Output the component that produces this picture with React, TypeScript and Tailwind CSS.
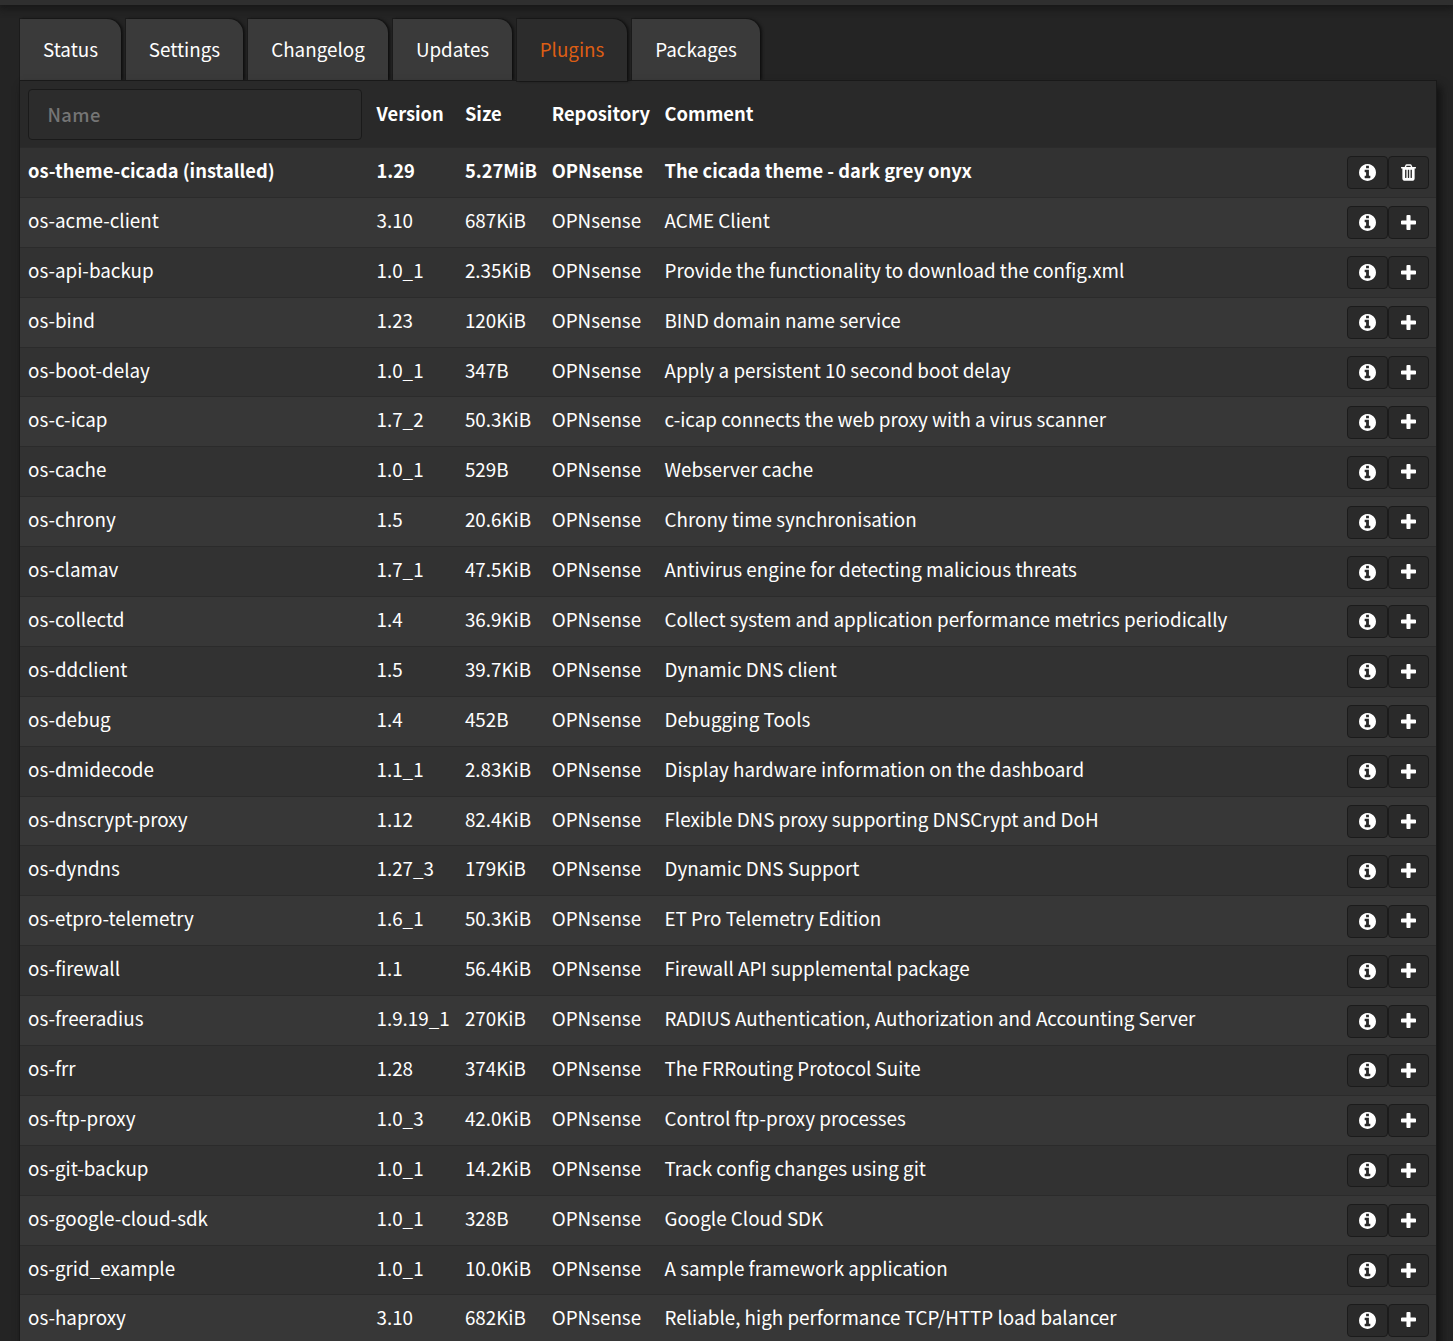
import React from "react";

const icons = {
  info: { box: "0 128 1536 1536", d: "M1024 1376v-160q0-14-9-23t-23-9h-96v-512q0-14-9-23t-23-9h-320q-14 0-23 9t-9 23v160q0 14 9 23t23 9h96v320h-96q-14 0-23 9t-9 23v160q0 14 9 23t23 9h448q14 0 23-9t9-23zm-128-896v-160q0-14-9-23t-23-9h-192q-14 0-23 9t-9 23v160q0 14 9 23t23 9h192q14 0 23-9t9-23zm640 416q0 209-103 385.5t-279.5 279.5-385.5 103-385.5-103-279.5-279.5-103-385.5 103-385.5 279.5-279.5 385.5-103 385.5 103 279.5 279.5 103 385.5z" },
  plus: { box: "0 128 1408 1408", d: "M1408 736v192q0 40-28 68t-68 28h-416v416q0 40-28 68t-68 28h-192q-40 0-68-28t-28-68v-416h-416q-40 0-68-28t-28-68v-192q0-40 28-68t68-28h416v-416q0-40 28-68t68-28h192q40 0 68 28t28 68v416h416q40 0 68 28t28 68z" },
  trash: { box: "0 128 1408 1536", d: "M512 1376v-704q0-14-9-23t-23-9h-64q-14 0-23 9t-9 23v704q0 14 9 23t23 9h64q14 0 23-9t9-23zm256 0v-704q0-14-9-23t-23-9h-64q-14 0-23 9t-9 23v704q0 14 9 23t23 9h64q14 0 23-9t9-23zm256 0v-704q0-14-9-23t-23-9h-64q-14 0-23 9t-9 23v704q0 14 9 23t23 9h64q14 0 23-9t9-23zm-544-992h448l-48-117q-7-9-17-11h-317q-10 2-17 11zm928 32v64q0 14-9 23t-23 9h-96v948q0 83-47 143.5t-113 60.5h-832q-66 0-113-58.5t-47-141.5v-952h-96q-14 0-23-9t-9-23v-64q0-14 9-23t23-9h309l70-167q15-37 54-63t79-26h320q40 0 79 26t54 63l70 167h309q14 0 23 9t9 23z" },
};

function Icon({ name, className }: { name: keyof typeof icons; className: string }) {
  return (
    <svg viewBox={icons[name].box} className={className} fill="currentColor" aria-hidden="true">
      <path d={icons[name].d} />
    </svg>
  );
}

const tabs = [
  { label: "Status", width: "w-[101px]" },
  { label: "Settings", width: "w-[117px]" },
  { label: "Changelog", width: "w-[140px]" },
  { label: "Updates", width: "w-[119px]" },
  { label: "Plugins", width: "w-[110px]", active: true },
  { label: "Packages", width: "w-[128px]" },
];

const plugins = [
  ["os-theme-cicada (installed)", "1.29", "5.27MiB", "The cicada theme - dark grey onyx"],
  ["os-acme-client", "3.10", "687KiB", "ACME Client"],
  ["os-api-backup", "1.0_1", "2.35KiB", "Provide the functionality to download the config.xml"],
  ["os-bind", "1.23", "120KiB", "BIND domain name service"],
  ["os-boot-delay", "1.0_1", "347B", "Apply a persistent 10 second boot delay"],
  ["os-c-icap", "1.7_2", "50.3KiB", "c-icap connects the web proxy with a virus scanner"],
  ["os-cache", "1.0_1", "529B", "Webserver cache"],
  ["os-chrony", "1.5", "20.6KiB", "Chrony time synchronisation"],
  ["os-clamav", "1.7_1", "47.5KiB", "Antivirus engine for detecting malicious threats"],
  ["os-collectd", "1.4", "36.9KiB", "Collect system and application performance metrics periodically"],
  ["os-ddclient", "1.5", "39.7KiB", "Dynamic DNS client"],
  ["os-debug", "1.4", "452B", "Debugging Tools"],
  ["os-dmidecode", "1.1_1", "2.83KiB", "Display hardware information on the dashboard"],
  ["os-dnscrypt-proxy", "1.12", "82.4KiB", "Flexible DNS proxy supporting DNSCrypt and DoH"],
  ["os-dyndns", "1.27_3", "179KiB", "Dynamic DNS Support"],
  ["os-etpro-telemetry", "1.6_1", "50.3KiB", "ET Pro Telemetry Edition"],
  ["os-firewall", "1.1", "56.4KiB", "Firewall API supplemental package"],
  ["os-freeradius", "1.9.19_1", "270KiB", "RADIUS Authentication, Authorization and Accounting Server"],
  ["os-frr", "1.28", "374KiB", "The FRRouting Protocol Suite"],
  ["os-ftp-proxy", "1.0_3", "42.0KiB", "Control ftp-proxy processes"],
  ["os-git-backup", "1.0_1", "14.2KiB", "Track config changes using git"],
  ["os-google-cloud-sdk", "1.0_1", "328B", "Google Cloud SDK"],
  ["os-grid_example", "1.0_1", "10.0KiB", "A sample framework application"],
  ["os-haproxy", "3.10", "682KiB", "Reliable, high performance TCP/HTTP load balancer"],
];

const columns = "grid grid-cols-[348.5px_88.4px_86.8px_112.8px_1fr_82px] pl-2 pr-[7px]";

function ActionButton({ label, children }: { label: string; children: React.ReactNode }) {
  return (
    <button aria-label={label} className="flex h-[33px] w-[41px] items-center justify-center rounded-[4px] border border-[#1b1b1b] bg-[#2a2a2a]">
      {children}
    </button>
  );
}

export default function App() {
  return (
    <div className="flex h-[1341px] flex-col overflow-hidden bg-[#242424] font-['Noto_Sans_CJK_SC',sans-serif] text-[18.34px] leading-[28px] text-white">
      <div className="relative h-[5px] shrink-0 bg-[#2f2f2f] shadow-[0_1px_8px_2px_#151515]" />
      <nav className="mt-[14px] ml-5 flex h-[61px] shrink-0 gap-[5px] text-[18.82px]">
        {tabs.map((t) => (
          <div
            key={t.label}
            className={`${t.width} flex shrink-0 items-center justify-center rounded-tr-[14px] shadow-[2px_0_3px_#101010,0_0_0_1px_#1c1c1c] ${
              t.active ? "relative z-10 h-[62px] bg-[#2c2c2c] pb-[3px] text-[#dd5e14]" : "bg-[#3a3a3a] pb-[2px]"
            }`}
          >
            {t.label}
          </div>
        ))}
      </nav>
      <main className="mr-4 ml-[19px] flex grow flex-col border border-b-0 border-[#191919] bg-[#292929] shadow-[4px_6px_8px_#121212]">
        <div className={`${columns} h-[66px] shrink-0 items-center font-bold [&>span]:pb-[2px]`}>
          <input placeholder="Name" className="h-[51px] w-[334px] rounded-[4px] border border-[#1a1a1a] bg-[#2c2c2c] px-[18.5px] font-medium tracking-[0.4px] placeholder:text-[#757575]" />
          <span>Version</span>
          <span>Size</span>
          <span>Repository</span>
          <span>Comment</span>
        </div>
        {plugins.map(([name, version, size, comment], i) => (
          <div
            key={name}
            className={`${columns} h-[49.892px] shrink-0 items-center border-t border-[#2b2b2b] [&>span]:pb-[5px] ${
              i % 2 ? "bg-[#373737]" : "bg-[#323232]"
            } ${i ? "text-[18.82px] font-normal" : "font-bold"}`}
          >
            <span>{name}</span>
            <span>{version}</span>
            <span>{size}</span>
            <span>OPNsense</span>
            <span>{comment}</span>
            <div className="flex pt-px">
              <ActionButton label="Info">
                <Icon name="info" className="mr-px size-[17px]" />
              </ActionButton>
              <ActionButton label={i ? "Install" : "Remove"}>
                {i ? <Icon name="plus" className="mb-px size-[15px]" /> : <Icon name="trash" className="h-[17px] w-[15px]" />}
              </ActionButton>
            </div>
          </div>
        ))}
      </main>
    </div>
  );
}
